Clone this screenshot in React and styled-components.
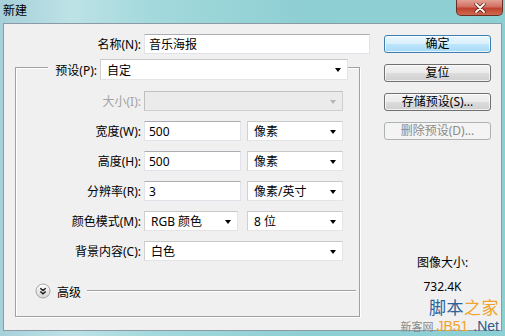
import React from 'react'
import styled, { createGlobalStyle } from 'styled-components'

const GlobalStyle = createGlobalStyle`
  html, body {
    margin: 0;
    padding: 0;
  }
  body {
    width: 505px;
    height: 336px;
    overflow: hidden;
    font-family: "Noto Sans", "Noto Sans CJK SC", sans-serif;
    font-size: 12px;
    color: #000;
  }
`

const Window = styled.div`
  position: relative;
  width: 505px;
  height: 336px;
  box-sizing: border-box;
  display: flex;
  flex-direction: column;
  background: linear-gradient(90deg, #a6d0da 0%, #bde2e6 14%, #a3d9dc 30%, #8ecfd3 60%, #8dd0d4 100%);
`

const TitleBar = styled.div`
  height: 23px;
  display: flex;
  justify-content: space-between;
  align-items: flex-start;
  padding-left: 3px;
  flex-shrink: 0;
`

const Title = styled.div`
  line-height: 20px;
  font-family: "Noto Sans CJK SC", sans-serif;
`

const CloseButton = styled.div`
  width: 47px;
  height: 16px;
  margin-right: 2px;
  box-sizing: border-box;
  border: 1px solid #6a2e26;
  border-top: none;
  border-radius: 0 0 5px 5px;
  background: linear-gradient(180deg, #e2a193 0%, #d07060 45%, #c0402e 55%, #cf6a4e 100%);
  display: flex;
  align-items: center;
  justify-content: center;
`

const Panel = styled.div`
  flex: 1;
  margin: 0 3px 5px 3px;
  background: #f0f0f0;
  border: 1px solid #8b9aa5;
  display: flex;
`

const LeftColumn = styled.div`
  width: 366px;
  padding-top: 10px;
  flex-shrink: 0;
`

const Row = styled.div`
  display: flex;
  align-items: center;
`

const Controls = styled.div`
  display: flex;
  align-items: center;
  gap: ${p => p.$gap || 0}px;
`

const Label = styled.div`
  width: ${p => (p.$width ? `${p.$width}px` : 'auto')};
  box-sizing: border-box;
  padding-right: 3px;
  text-align: right;
  white-space: nowrap;
  flex-shrink: 0;
  color: ${p => (p.$disabled ? '#a3a3a3' : '#000')};
  font-family: "Noto Sans", "Noto Sans CJK SC", sans-serif;
`

const Field = styled.div`
  width: ${p => p.$width}px;
  height: ${p => p.$height || 20}px;
  box-sizing: border-box;
  flex-shrink: 0;
  background: #fff;
  border: 1px solid #e2e3ea;
  border-top-color: #abadb3;
  padding: 0 4px;
  display: flex;
  align-items: center;
  white-space: nowrap;
  font-family: "Noto Sans", "Noto Sans CJK SC", sans-serif;
`

const SelectBox = styled.div`
  width: ${p => p.$width}px;
  height: ${p => p.$height || 20}px;
  box-sizing: border-box;
  flex-shrink: 0;
  background: ${p => (p.$disabled ? '#ebebeb' : '#fff')};
  border: 1px solid ${p => (p.$disabled ? '#cfcfcf' : '#e4e4e4')};
  border-top-color: ${p => (p.$disabled ? '#c0c0c0' : '#c8c8c8')};
  border-left-color: ${p => (p.$disabled ? '#c0c0c0' : '#d0d0d0')};
  padding: 0 6px 0 6px;
  display: flex;
  align-items: center;
  justify-content: space-between;
  white-space: nowrap;
  font-family: "Noto Sans", "Noto Sans CJK SC", sans-serif;
`

const Arrow = styled.span`
  width: 0;
  height: 0;
  border-left: 3.5px solid transparent;
  border-right: 3.5px solid transparent;
  border-top: 4px solid ${p => (p.$disabled ? '#b5b5b5' : '#000')};
  margin-top: 1px;
`

const Group = styled.div`
  margin: 13px 0 0 11px;
  width: 345px;
  box-sizing: border-box;
  padding-bottom: 17px;
  border: 1px solid #a0a0a0;
  box-shadow: inset 1px 1px 0 #fff, 1px 1px 0 #fff;
`

const GroupHeader = styled.div`
  display: flex;
  align-items: center;
  width: fit-content;
  margin: -9px 0 0 32px;
  background: #f0f0f0;
`

const Rows = styled.div`
  display: flex;
  flex-direction: column;
  gap: 10px;
  margin-top: 11px;
`

const AdvancedRow = styled.div`
  display: flex;
  align-items: center;
  height: 16px;
  margin-top: 22px;
  padding-left: 19px;
`

const AdvancedText = styled.span`
  margin-left: 6px;
  font-family: "Noto Sans CJK SC", sans-serif;
`

const Divider = styled.div`
  flex: 1;
  height: 1px;
  background: #a0a0a0;
  border-bottom: 1px solid #fff;
  margin: 0 3px 0 6px;
`

const RightColumn = styled.div`
  margin-left: 14px;
  padding-top: 11px;
  width: 107px;
  display: flex;
  flex-direction: column;
`

const ButtonStack = styled.div`
  display: flex;
  flex-direction: column;
  gap: 11px;
`

const Button = styled.div`
  height: 18px;
  box-sizing: border-box;
  border: 1px solid ${p => (p.$primary ? '#3c7fb1' : p.$disabled ? '#adb2b5' : '#707070')};
  border-radius: 3px;
  text-align: center;
  line-height: 16px;
  color: ${p => (p.$disabled ? '#8a8a8a' : '#000')};
  background: ${p =>
    p.$primary
      ? 'linear-gradient(180deg, #eaf6fd 0%, #d9f0fc 50%, #bee6fd 50%, #a7d9f5 100%)'
      : p.$disabled
      ? '#f4f4f4'
      : 'linear-gradient(180deg, #f2f2f2 0%, #ebebeb 50%, #dddddd 50%, #cfcfcf 100%)'};
  box-shadow: inset 0 0 0 1px ${p => (p.$disabled ? '#f4f4f4' : 'rgba(255,255,255,0.7)')};
  white-space: nowrap;
  font-family: "Noto Sans", "Noto Sans CJK SC", sans-serif;
`

const SizeInfo = styled.div`
  margin-top: 115px;
  padding-left: 10px;
  display: flex;
  flex-direction: column;
  align-items: center;
  gap: 8px;
`

const InfoLine = styled.div`
  height: 16px;
  line-height: 16px;
  overflow: hidden;
  white-space: nowrap;
  font-family: "Noto Sans", "Noto Sans CJK SC", sans-serif;
`

const Watermark = styled.div`
  position: absolute;
  right: 6px;
  bottom: 3px;
  display: flex;
  flex-direction: column;
  align-items: flex-end;
  font-family: "Noto Sans CJK SC", sans-serif;
  line-height: 1;
`

const MarkTop = styled.div`
  font-size: 17px;
  letter-spacing: 0.5px;
  color: #2b5f9e;
  span {
    color: #f0a22a;
  }
`

const MarkBottom = styled.div`
  margin-top: 4px;
  display: flex;
  align-items: baseline;
  font-size: 14px;
  font-family: "Liberation Sans", sans-serif;
  color: #2f5a8c;
`

const MarkSmall = styled.span`
  font-size: 11px;
  color: #8a8a8a;
  font-family: "Noto Sans CJK SC", serif;
  margin-right: 3px;
`

const MarkOrange = styled.span`
  color: #f0a22a;
  margin-right: 5px;
`

const ChevronCircle = () => (
  <svg width="16" height="16" viewBox="0 0 16 16">
    <defs>
      <linearGradient id="cc" x1="0" y1="0" x2="0" y2="1">
        <stop offset="0" stopColor="#ffffff" />
        <stop offset="1" stopColor="#d4d4d4" />
      </linearGradient>
    </defs>
    <circle cx="8" cy="8" r="7" fill="url(#cc)" stroke="#a6a6a6" />
    <path d="M5.3 5.2 L8 7.6 L10.7 5.2 M5.3 8.4 L8 10.8 L10.7 8.4" fill="none" stroke="#1a1a1a" strokeWidth="1.4" />
  </svg>
)

const CloseIcon = () => (
  <svg width="12" height="10" viewBox="0 0 12 10">
    <path d="M2 1 L10 9 M10 1 L2 9" stroke="#5a1d14" strokeWidth="3.2" strokeLinecap="round" />
    <path d="M2 1 L10 9 M10 1 L2 9" stroke="#fff" strokeWidth="1.8" strokeLinecap="round" />
  </svg>
)

const Select = ({ width, height, disabled, children }) => (
  <SelectBox $width={width} $height={height} $disabled={disabled}>
    <span>{children}</span>
    <Arrow $disabled={disabled} />
  </SelectBox>
)

const sizeRows = [
  { label: '宽度(W):', value: '500', unit: '像素' },
  { label: '高度(H):', value: '500', unit: '像素' },
  { label: '分辨率(R):', value: '3', unit: '像素/英寸' },
]

const App = () => {
  return (
    <Window>
      <GlobalStyle />
      <TitleBar>
        <Title>新建</Title>
        <CloseButton>
          <CloseIcon />
        </CloseButton>
      </TitleBar>
      <Panel>
        <LeftColumn>
          <Row>
            <Label $width={140}>名称(N):</Label>
            <Field $width={226}>音乐海报</Field>
          </Row>
          <Group>
            <GroupHeader>
              <Label $width={52}>预设(P):</Label>
              <Select width={248} height={21}>自定</Select>
            </GroupHeader>
            <Rows>
              <Row>
                <Label $width={128} $disabled>大小(I):</Label>
                <Select width={199} disabled />
              </Row>
              {sizeRows.map(r => (
                <Row key={r.label}>
                  <Label $width={128}>{r.label}</Label>
                  <Controls $gap={6}>
                    <Field $width={97}>{r.value}</Field>
                    <Select width={96}>{r.unit}</Select>
                  </Controls>
                </Row>
              ))}
              <Row>
                <Label $width={128}>颜色模式(M):</Label>
                <Controls $gap={9}>
                  <Select width={94}>RGB 颜色</Select>
                  <Select width={96}>8 位</Select>
                </Controls>
              </Row>
              <Row>
                <Label $width={128}>背景内容(C):</Label>
                <Select width={199}>白色</Select>
              </Row>
            </Rows>
            <AdvancedRow>
              <ChevronCircle />
              <AdvancedText>高级</AdvancedText>
              <Divider />
            </AdvancedRow>
          </Group>
        </LeftColumn>
        <RightColumn>
          <ButtonStack>
            <Button $primary>确定</Button>
            <Button>复位</Button>
            <Button>存储预设(S)...</Button>
            <Button $disabled>删除预设(D)...</Button>
          </ButtonStack>
          <SizeInfo>
            <InfoLine>图像大小:</InfoLine>
            <InfoLine>732.4K</InfoLine>
          </SizeInfo>
        </RightColumn>
      </Panel>
      <Watermark>
        <MarkTop>
          脚本<span>之家</span>
        </MarkTop>
        <MarkBottom>
          <MarkSmall>新客网</MarkSmall>
          <MarkOrange>JB51</MarkOrange>
          .Net
        </MarkBottom>
      </Watermark>
    </Window>
  )
}

export default App
